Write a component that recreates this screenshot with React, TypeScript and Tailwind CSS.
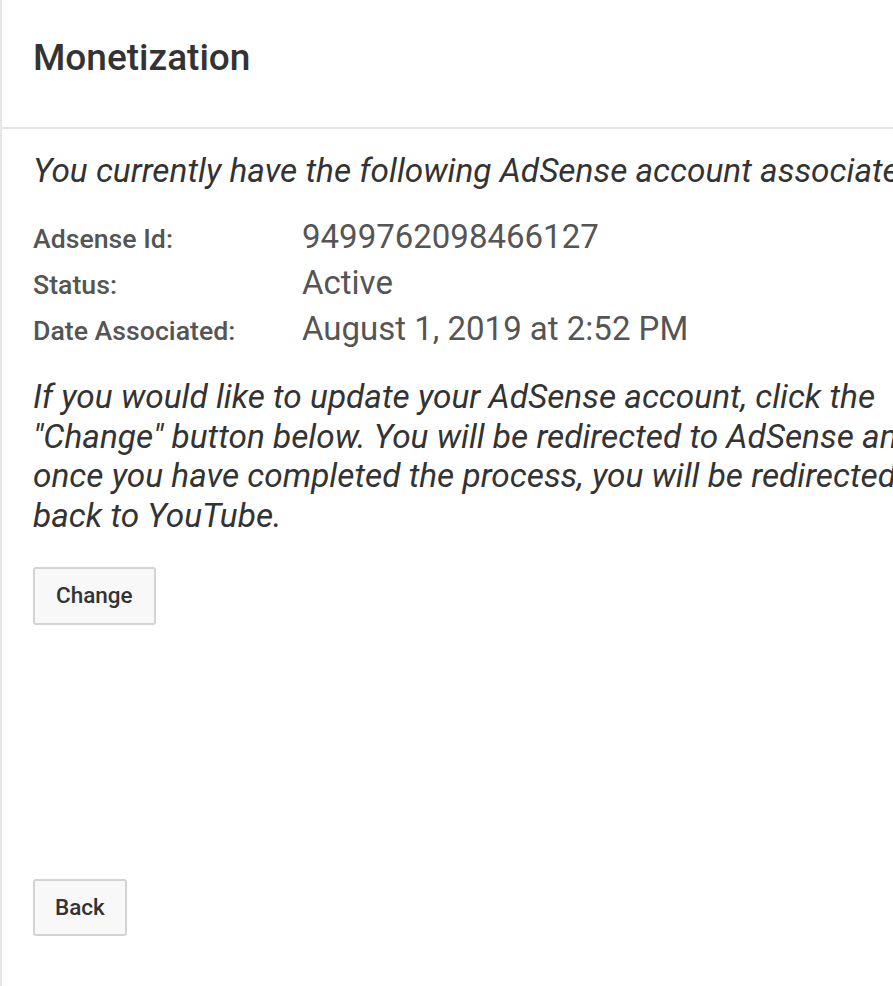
import React from 'react';

const rows = [
  { label: 'Adsense Id:', value: '9499762098466127' },
  { label: 'Status:', value: 'Active' },
  { label: 'Date Associated:', value: 'August 1, 2019 at 2:52 PM' },
];

export default function App() {
  return (
    <div
      className="w-[893px] h-[986px] overflow-hidden bg-white border-l-2 border-[#e6e6e6] flex flex-col"
      style={{ fontFamily: 'Roboto, "Noto Sans", sans-serif' }}
    >
      <div className="h-[129px] shrink-0 border-b-2 border-[#e3e3e3] pl-[31px] pt-[35px]">
        <h1 className="text-[37px] leading-[46px] font-medium text-[#333]">Monetization</h1>
      </div>

      <div className="pl-[31px] pt-[22px] flex flex-col">
        <p className="italic text-[33.4px] leading-[40px] text-[#333] whitespace-nowrap overflow-hidden">
          You currently have the following AdSense account associated with your channel.
        </p>

        <div className="mt-[21px] flex flex-col">
          {rows.map((r) => (
            <div key={r.label} className="flex items-baseline h-[46px]">
              <div className="w-[269px] text-[26.7px] font-medium text-[#555]">{r.label}</div>
              <div className="text-[33px] text-[#555]">{r.value}</div>
            </div>
          ))}
        </div>

        <p className="mt-[27px] italic text-[33.4px] leading-[39.5px] text-[#333] w-[900px]">
          If you would like to update your AdSense account, click the
          <br />
          "Change" button below. You will be redirected to AdSense and
          <br />
          once you have completed the process, you will be redirected
          <br />
          back to YouTube.
        </p>

        <div className="mt-[32px]">
          <button className="h-[58px] px-[21px] bg-[#f8f8f8] border-2 border-[#d3d3d3] rounded-[3px] text-[22.5px] font-medium text-[#333]">
            Change
          </button>
        </div>
      </div>

      <div className="pl-[31px] mt-auto mb-[50px]">
        <button className="h-[57px] px-[20px] bg-[#f8f8f8] border-2 border-[#d3d3d3] rounded-[3px] text-[22.5px] font-medium text-[#333]">
          Back
        </button>
      </div>
    </div>
  );
}
